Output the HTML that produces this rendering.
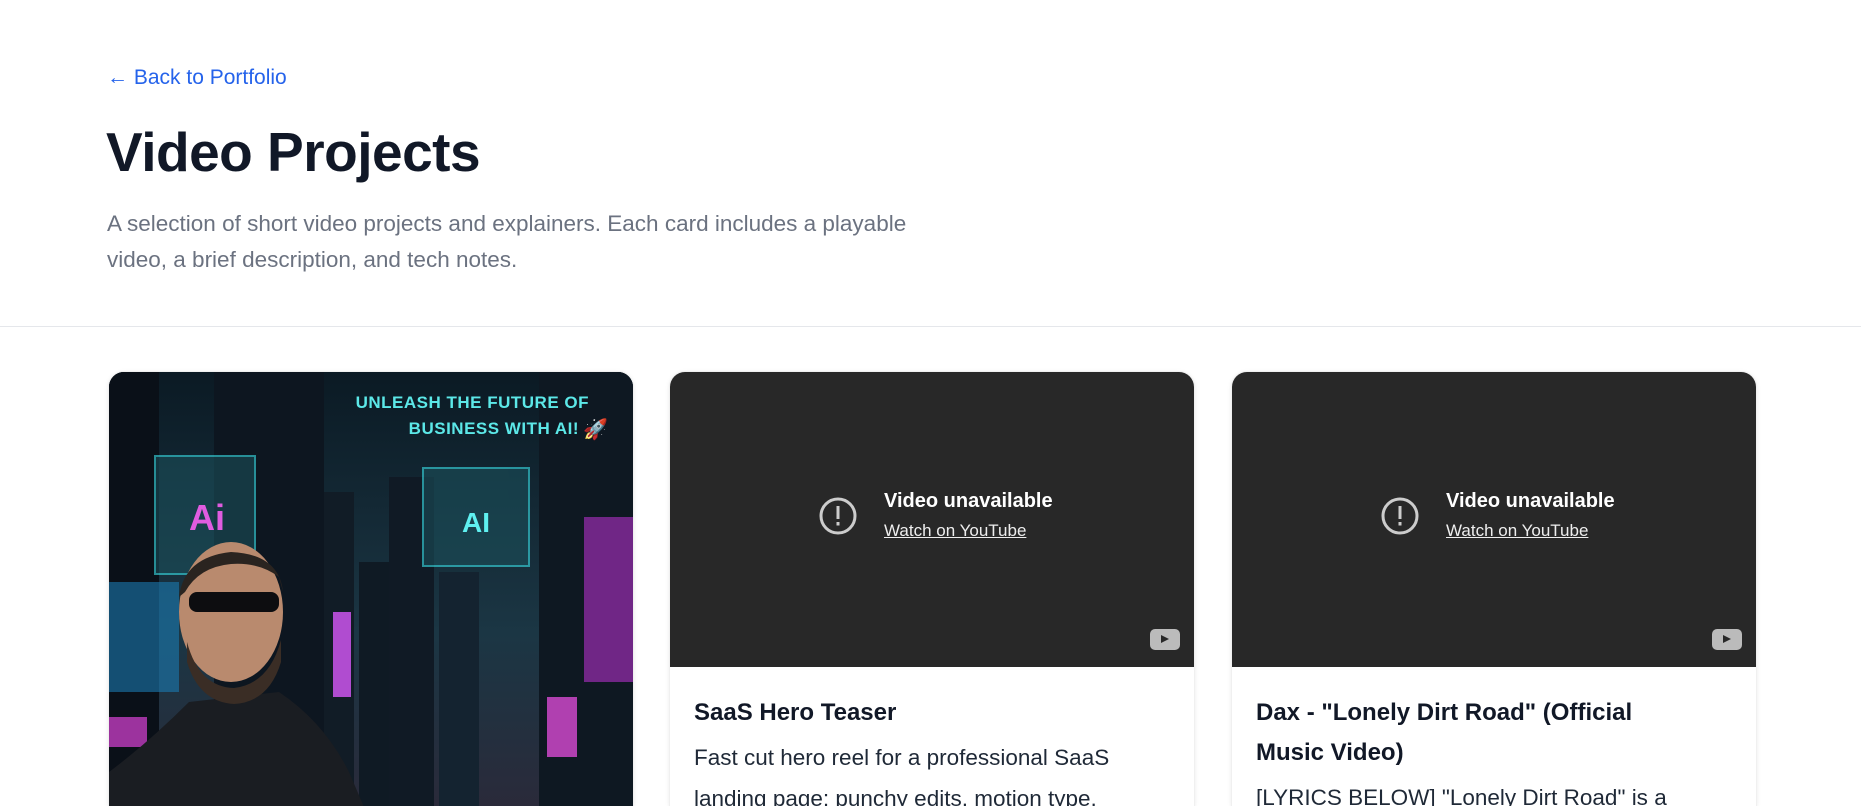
<!DOCTYPE html>
<html><head><meta charset="utf-8"><style>
*{margin:0;padding:0;box-sizing:border-box}
html,body{width:1861px;height:806px;overflow:hidden;background:#fff;font-family:"Liberation Sans",sans-serif;position:relative}
.back{position:absolute;left:107px;top:66px;font-size:21px;color:#2563eb}
h1{position:absolute;left:106px;top:120px;font-size:55px;font-weight:700;color:#111827;letter-spacing:-0.5px}
.lead{position:absolute;left:107px;top:206px;width:860px;font-size:22.5px;line-height:36px;color:#6b7280}
.hr{position:absolute;left:0;top:326px;width:1861px;height:1px;background:#e5e7eb}
.card{position:absolute;top:371px;width:526px;height:435px;border-radius:16px 16px 0 0;overflow:hidden;background:#fff;box-shadow:0 1px 4px rgba(0,0,0,.08);border:1px solid #f0f0f0;border-bottom:none}
.vid{height:295px;background:#282828;position:relative}
.vu{position:absolute;left:148px;top:118px;display:flex;align-items:center;color:#fff}
.vu svg{margin-right:26px}
.vu b{display:block;font-size:20px;font-weight:600}
.vu u{display:block;font-size:17px;margin-top:8px;color:#eee}
.yt{position:absolute;right:14px;bottom:17px;width:30px;height:21px;background:#bbb;border-radius:5px}
.yt:after{content:"";position:absolute;left:11px;top:6px;border-left:8px solid #282828;border-top:4.5px solid transparent;border-bottom:4.5px solid transparent}
.ct{padding:26px 60px 0 24px;font-size:24px;font-weight:700;color:#111827;line-height:40px}
.cd{padding:4px 20px 0 24px;font-size:22.5px;line-height:41px;color:#1f2937}
</style></head><body>
<div class="back">← Back to Portfolio</div>
<h1>Video Projects</h1>
<div class="lead">A selection of short video projects and explainers. Each card includes a playable video, a brief description, and tech notes.</div>
<div class="hr"></div>

<div class="card" style="left:108px;background:#0c1722">
<svg width="526" height="435" viewBox="0 0 526 435">
<defs><linearGradient id="sk" x1="0" y1="0" x2="0" y2="1"><stop offset="0" stop-color="#0b1a24"/><stop offset="0.6" stop-color="#1b3644"/><stop offset="1" stop-color="#2a2a3a"/></linearGradient></defs>
<rect width="526" height="435" fill="url(#sk)"/>
<rect x="0" y="0" width="50" height="435" fill="#0a1018"/>
<rect x="105" y="0" width="110" height="435" fill="#0d1620"/>
<rect x="215" y="120" width="30" height="315" fill="#111c26"/>
<rect x="250" y="190" width="70" height="245" fill="#0f1a24"/>
<rect x="280" y="105" width="45" height="330" fill="#101a25"/>
<rect x="330" y="200" width="40" height="235" fill="#142330"/>
<rect x="430" y="0" width="96" height="435" fill="#0e1822"/>
<rect x="46" y="84" width="100" height="118" fill="#1b4f5a" opacity=".6" stroke="#39e0e8" stroke-width="2"/>
<text x="98" y="158" font-size="36" font-weight="700" fill="#e05ce0" text-anchor="middle" font-family="Liberation Sans">Ai</text>
<rect x="314" y="96" width="106" height="98" fill="#1b4f5a" opacity=".6" stroke="#39e0e8" stroke-width="2"/>
<text x="367" y="160" font-size="28" font-weight="700" fill="#5ff0f0" text-anchor="middle" font-family="Liberation Sans">AI</text>
<rect x="475" y="145" width="52" height="165" fill="#8a2aa0" opacity=".8"/>
<rect x="0" y="210" width="70" height="110" fill="#1b7ab0" opacity=".6"/>
<rect x="0" y="345" width="38" height="30" fill="#c03cc0" opacity=".8"/>
<rect x="224" y="240" width="18" height="85" fill="#b04cd0"/>
<rect x="438" y="325" width="30" height="60" fill="#b040b0"/>
<text x="480" y="36" font-size="17" font-weight="700" fill="#5ce8e8" text-anchor="end" font-family="Liberation Sans" letter-spacing=".5">UNLEASH THE FUTURE OF</text>
<text x="470" y="62" font-size="17" font-weight="700" fill="#5ce8e8" text-anchor="end" font-family="Liberation Sans" letter-spacing=".5">BUSINESS WITH AI!</text>
<text x="474" y="64" font-size="20">🚀</text>
<path d="M0 435 L0 400 Q40 370 80 330 L170 320 Q215 350 240 400 L255 435 Z" fill="#1a1d22"/>
<ellipse cx="122" cy="240" rx="52" ry="70" fill="#b98a6e"/>
<path d="M70 225 Q75 185 122 180 Q170 182 174 220 L170 205 Q150 190 122 192 Q90 195 76 220 Z" fill="#2a2420"/>
<path d="M78 270 Q90 315 125 316 Q160 312 172 268 L172 290 Q160 330 125 332 Q90 330 78 290 Z" fill="#3a2d25"/>
<rect x="80" y="220" width="90" height="20" rx="8" fill="#0d0d10"/>
</svg>
</div>

<div class="card" style="left:669px">
<div class="vid">
<div class="vu"><svg width="40" height="40" viewBox="0 0 40 40"><circle cx="20" cy="20" r="17" fill="none" stroke="#ccc" stroke-width="3"/><rect x="18.5" y="10" width="3" height="13" fill="#ccc"/><rect x="18.5" y="26" width="3" height="3.5" fill="#ccc"/></svg><div><b>Video unavailable</b><u>Watch on YouTube</u></div></div>
<div class="yt"></div></div>
<div class="ct">SaaS Hero Teaser</div>
<div class="cd">Fast cut hero reel for a professional SaaS landing page; punchy edits, motion type,</div>
</div>

<div class="card" style="left:1231px">
<div class="vid">
<div class="vu"><svg width="40" height="40" viewBox="0 0 40 40"><circle cx="20" cy="20" r="17" fill="none" stroke="#ccc" stroke-width="3"/><rect x="18.5" y="10" width="3" height="13" fill="#ccc"/><rect x="18.5" y="26" width="3" height="3.5" fill="#ccc"/></svg><div><b>Video unavailable</b><u>Watch on YouTube</u></div></div>
<div class="yt"></div></div>
<div class="ct">Dax - "Lonely Dirt Road" (Official Music Video)</div>
<div class="cd">[LYRICS BELOW] "Lonely Dirt Road" is a</div>
</div>
</body></html>
